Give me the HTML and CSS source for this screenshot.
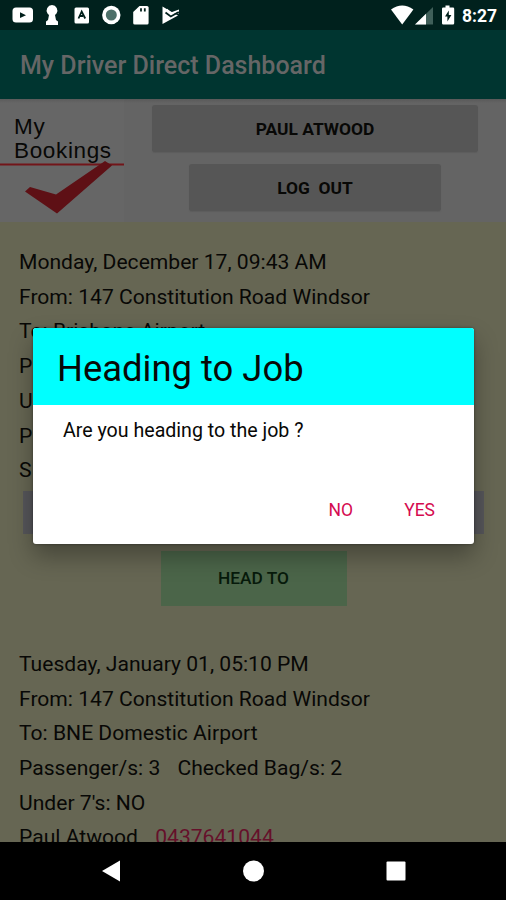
FILE: index.html
```
<!DOCTYPE html>
<html lang="en">
<head>
    <meta charset="UTF-8">
    <meta name="viewport" content="width=device-width, initial-scale=1.0">
    <title>My Driver Direct Dashboard</title>
    <link rel="stylesheet" href="styles.css">
</head>
<body>

    <div class="status-bar">
        <svg class="status-icons" width="190" height="30" viewBox="0 0 190 30">
            <rect x="12.5" y="7.5" width="20.5" height="15" rx="3.5" fill="#fff"/>
            <path d="M20 12.3l6 2.9-6 2.9z" fill="#001f1b"/>
            <path d="M52 5a5.500 5.500 0 0 1 4.500 8.500l-1.500 1.500 1 5 2 1.500v3.500H46v-3.500l2-1.500 1-5-1.500-1.500A5.500 5.500 0 0 1 52 5z" fill="#fff"/>
            <rect x="74.500" y="7.500" width="14.500" height="16" rx="1.500" fill="#fff"/>
            <path d="M78.500 18.500l3.200-7 3.500 7M80 16h3" fill="none" stroke="#001f1b" stroke-width="1.800"/>
            <circle cx="111.300" cy="15" r="9.200" fill="#fff"/>
            <circle cx="111.300" cy="15" r="5.500" fill="#4d7069"/>
            <path d="M139.500 6H147q1.600 0 1.600 1.600v15.300q0 1.600-1.600 1.600h-12.200q-1.600 0-1.600-1.600V12z" fill="#fff"/>
            <path d="M141 8.300v3.200M144.800 8.300v3.200" stroke="#001f1b" stroke-width="1.800"/>
            <path d="M162.500 6.500l7.500 4.500 8 4.500-15.500 8.500z" fill="#fff"/>
            <path d="M166.500 9.500l4.500 4 7-2.500v2.500" fill="none" stroke="#fff" stroke-width="2"/>
            <path d="M165.500 12.500l5.300 4 8-4.500" fill="none" stroke="#001f1b" stroke-width="1.700"/>
        </svg>
        <div class="status-right">
            <svg width="68" height="30" viewBox="0 0 68 30">
                <path d="M1 9.500q11.200-8 22.400 0L12.200 24.500z" fill="#fff"/>
                <path d="M43 7v17.500H25z" fill="#3f5f59"/>
                <path d="M36 13.800v10.700H25z" fill="#fff"/>
                <path d="M55.500 5.500h4V7.500H63q1.200 0 1.200 1.200v14.600q0 1.200-1.200 1.200H53.200q-1.200 0-1.200-1.200V8.700q0-1.200 1.200-1.200h2.300z" fill="#fff"/>
                <path d="M58.800 10.500l-3.800 6h2.400v5l4-6.500h-2.600z" fill="#001f1b"/>
            </svg>
            <span class="clock">8:27</span>
        </div>
    </div>

    <div class="app-bar">
        <h1>My Driver Direct Dashboard</h1>
    </div>

    <div class="header">
        <div class="bookings">
            <div class="bookings-text">My<br>Bookings</div>
            <svg class="tick" width="124" height="60" viewBox="0 0 124 60">
                <path d="M0 7.500h124" stroke="#721519" stroke-width="2"/>
                <path d="M25 34.500l5-4.500 26 7.500L105 4l7 4.500-55 48z" fill="#5e1015"/>
            </svg>
        </div>
        <div class="header-buttons">
            <button class="btn btn-user">PAUL ATWOOD</button>
            <button class="btn btn-logout">LOG&nbsp; OUT</button>
        </div>
    </div>

    <div class="content">
        <div class="job">
            <p>Monday, December 17, 09:43 AM</p>
            <p>From: 147 Constitution Road Windsor</p>
            <p>To: Brisbane Airport</p>
            <p>P</p>
            <p>U</p>
            <p>P</p>
            <p>S</p>
        </div>
        <div class="job-strip"></div>
        <button class="btn-head">HEAD TO</button>
        <div class="job">
            <p>Tuesday, January 01, 05:10 PM</p>
            <p>From: 147 Constitution Road Windsor</p>
            <p>To: BNE Domestic Airport</p>
            <p>Passenger/s: 3 <span class="bags">Checked Bag/s: 2</span></p>
            <p>Under 7's: NO</p>
            <p>Paul Atwood <span class="phone">0437641044</span></p>
        </div>
    </div>

    <div class="nav-bar">
        <svg width="506" height="58" viewBox="0 0 506 58">
            <path d="M102 29l18-10.500v21z" fill="#fff"/>
            <circle cx="253.500" cy="29" r="10.500" fill="#fff"/>
            <rect x="386.500" y="19.500" width="19" height="19" rx="1" fill="#fff"/>
        </svg>
    </div>

    <div class="dialog">
        <h2 class="dialog-title">Heading to Job</h2>
        <p class="dialog-message">Are you heading to the job ?</p>
        <div class="dialog-actions">
            <button>NO</button>
            <button>YES</button>
        </div>
    </div>

</body>
</html>
```

FILE: styles.css
```
* {
    box-sizing: border-box;
}

body {
    margin: 0;
    height: 900px;
    display: flex;
    flex-direction: column;
    overflow: hidden;
    font-family: Roboto, sans-serif;
    color: #080806;
    background-color: #666653;
}

h1, h2, p {
    margin: 0;
    font-weight: 400;
}

svg {
    display: block;
}

button {
    border: none;
    padding: 0;
    font-family: inherit;
    color: inherit;
    cursor: pointer;
}

.status-bar {
    height: 30px;
    flex: none;
    display: flex;
    justify-content: space-between;
    background-color: #00211d;
}

.status-right {
    display: flex;
    align-items: center;
    width: 116px;
    color: #fff;
}

.clock {
    margin-left: 4px;
    padding-top: 2px;
    font-size: 17.5px;
    font-weight: 700;
}

.app-bar {
    height: 69px;
    flex: none;
    display: flex;
    align-items: center;
    padding: 2px 20px 0;
    background-color: #003530;
}

.app-bar h1 {
    font-size: 25px;
    font-weight: 500;
    color: #666;
    white-space: nowrap;
}

.header {
    height: 123px;
    flex: none;
    display: flex;
    background: linear-gradient(#595959, #646464 4px, #646464);
}

.bookings {
    width: 124px;
    display: flex;
    flex-direction: column;
    background: linear-gradient(#5b5b5b, #666 4px, #666);
}

.bookings-text {
    height: 58px;
    padding: 16px 0 0 14px;
    font-family: "Liberation Sans", sans-serif;
    font-size: 22.5px;
    line-height: 24px;
    letter-spacing: 0.65px;
}

.header-buttons {
    flex: 1;
    display: flex;
    flex-direction: column;
    align-items: center;
    gap: 12px;
    padding-top: 6px;
}

.btn {
    height: 47px;
    border-radius: 3px;
    font-size: 17.4px;
    font-weight: 700;
    background-color: #565656;
    box-shadow: 0 1px 1px #5c5c5c;
}

.btn-user {
    width: 326px;
}

.btn-logout {
    width: 252px;
}

.content {
    flex: 1;
    min-height: 0;
    overflow: hidden;
    display: flex;
    flex-direction: column;
    align-items: center;
    padding-top: 23px;
}

.job {
    width: 100%;
    flex: none;
    padding-left: 19px;
    font-size: 21.1px;
    line-height: 34.7px;
    white-space: nowrap;
}

.job-strip {
    width: 461px;
    height: 43px;
    flex: none;
    margin-top: 3px;
    background-color: #56565a;
}

.btn-head {
    width: 186px;
    height: 55px;
    flex: none;
    margin: 17px 0 41px 1px;
    font-size: 17.3px;
    font-weight: 500;
    color: #071a0b;
    background-color: #4b6549;
}

.bags,
.phone {
    margin-left: 12px;
}

.phone {
    color: #65102a;
}

.nav-bar {
    height: 58px;
    flex: none;
    background-color: #000;
}

/* sits on top of the dimmed page */
.dialog {
    position: absolute;
    top: 328px;
    left: 33px;
    width: 441px;
    height: 216px;
    display: flex;
    flex-direction: column;
    border-radius: 3px;
    overflow: hidden;
    background-color: #fff;
    box-shadow: 0 12px 24px rgba(0, 0, 0, 0.32), 0 0 3px rgba(0, 0, 0, 0.4);
}

.dialog-title {
    height: 77px;
    padding: 2px 0 0 24px;
    font-size: 36.4px;
    line-height: 77px;
    background-color: #00ffff;
}

.dialog-message {
    padding: 12px 30px;
    font-size: 19.6px;
    line-height: 27px;
}

.dialog-actions {
    margin-top: auto;
    display: flex;
    justify-content: flex-end;
    gap: 51px;
    padding: 0 39px 22px 0;
}

.dialog-actions button {
    font-size: 17.5px;
    line-height: 23px;
    color: #d50b50;
    background: none;
}
```
